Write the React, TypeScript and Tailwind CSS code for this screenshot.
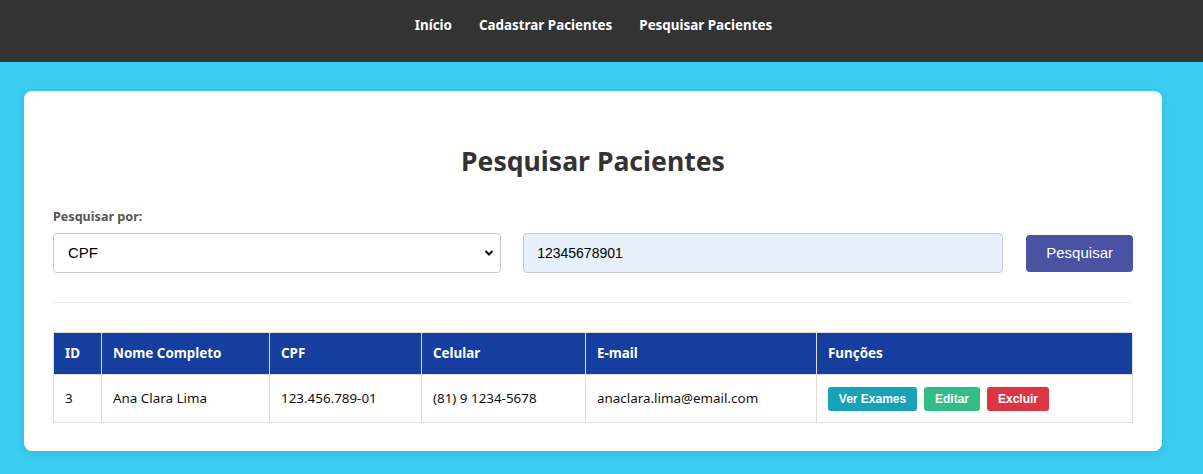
import React from "react";

export default function App() {
  return (
    <div className="min-h-[474px] bg-[#3bcdf0] font-['Noto_Sans',sans-serif]">
      <nav className="h-[62px] bg-[#333333] flex justify-center items-start pt-[15px] pr-[16px] gap-[27px] text-white text-[13.4px] font-bold">
        <a className="leading-[20px]">Início</a>
        <a className="leading-[20px]">Cadastrar Pacientes</a>
        <a className="leading-[20px]">Pesquisar Pacientes</a>
      </nav>
      <div className="pl-[24px] pt-[29px] pb-[24px]">
        <div className="w-[1138px] bg-white rounded-[8px] px-[29px] pt-[51px] pb-[28px] shadow-[0_2px_8px_rgba(0,0,0,0.1)]">
          <h1 className="text-center text-[26.6px] font-bold text-[#333] leading-[38px]">Pesquisar Pacientes</h1>
          <div className="mt-[28px] flex items-end gap-[22px]">
            <div className="w-[449px]">
              <label className="block text-[12.6px] font-bold text-[#555] leading-[18px] mb-[7px]">Pesquisar por:</label>
              <div className="relative h-[40px] border border-[#ccc] rounded-[4px] flex items-center pl-[14px] font-['Liberation_Sans',sans-serif] text-[15px] text-black">
                CPF
                <svg className="absolute right-[6px] top-[15px]" width="10" height="8" viewBox="0 0 10 8">
                  <path d="M1.5 2 L5 5.5 L8.5 2" stroke="#111" strokeWidth="2" fill="none" />
                </svg>
              </div>
            </div>
            <div className="w-[481px] h-[40px] bg-[#e8f0fe] border border-[#ccc] rounded-[4px] flex items-center pl-[13px] font-['Liberation_Sans',sans-serif] text-[14px] text-black">
              12345678901
            </div>
            <button className="ml-[1px] mb-[1px] w-[107px] h-[37px] bg-[#4a52a3] rounded-[4px] text-white text-[15px] font-['Liberation_Sans',sans-serif]">
              Pesquisar
            </button>
          </div>
          <div className="mt-[29px] h-px bg-[#eee]" />
          <table className="mt-[29px] w-full border-collapse text-[13.4px]">
            <thead>
              <tr className="bg-[#153e9e] text-white text-left">
                <th className="w-[48px] h-[42px] border border-[#ddd] pl-[11px] font-bold">ID</th>
                <th className="w-[168px] border border-[#ddd] pl-[11px] font-bold">Nome Completo</th>
                <th className="w-[152px] border border-[#ddd] pl-[11px] font-bold">CPF</th>
                <th className="w-[164px] border border-[#ddd] pl-[11px] font-bold">Celular</th>
                <th className="w-[231px] border border-[#ddd] pl-[11px] font-bold">E-mail</th>
                <th className="border border-[#ddd] pl-[11px] font-bold">Funções</th>
              </tr>
            </thead>
            <tbody>
              <tr className="text-[#111]">
                <td className="h-[48px] border border-[#ddd] pl-[11px]">3</td>
                <td className="border border-[#ddd] pl-[11px]">Ana Clara Lima</td>
                <td className="border border-[#ddd] pl-[11px]">123.456.789-01</td>
                <td className="border border-[#ddd] pl-[11px]">(81) 9 1234-5678</td>
                <td className="border border-[#ddd] pl-[11px]">anaclara.lima@email.com</td>
                <td className="border border-[#ddd] pl-[11px]">
                  <div className="flex gap-[7px] font-['Liberation_Sans',sans-serif] text-[12px] font-bold text-white">
                    <span className="w-[89px] h-[24px] rounded-[3px] bg-[#17a2b8] flex items-center justify-center">Ver Exames</span>
                    <span className="w-[56px] h-[24px] rounded-[3px] bg-[#33bb88] flex items-center justify-center">Editar</span>
                    <span className="w-[62px] h-[24px] rounded-[3px] bg-[#dc3545] flex items-center justify-center">Excluir</span>
                  </div>
                </td>
              </tr>
            </tbody>
          </table>
        </div>
      </div>
    </div>
  );
}
